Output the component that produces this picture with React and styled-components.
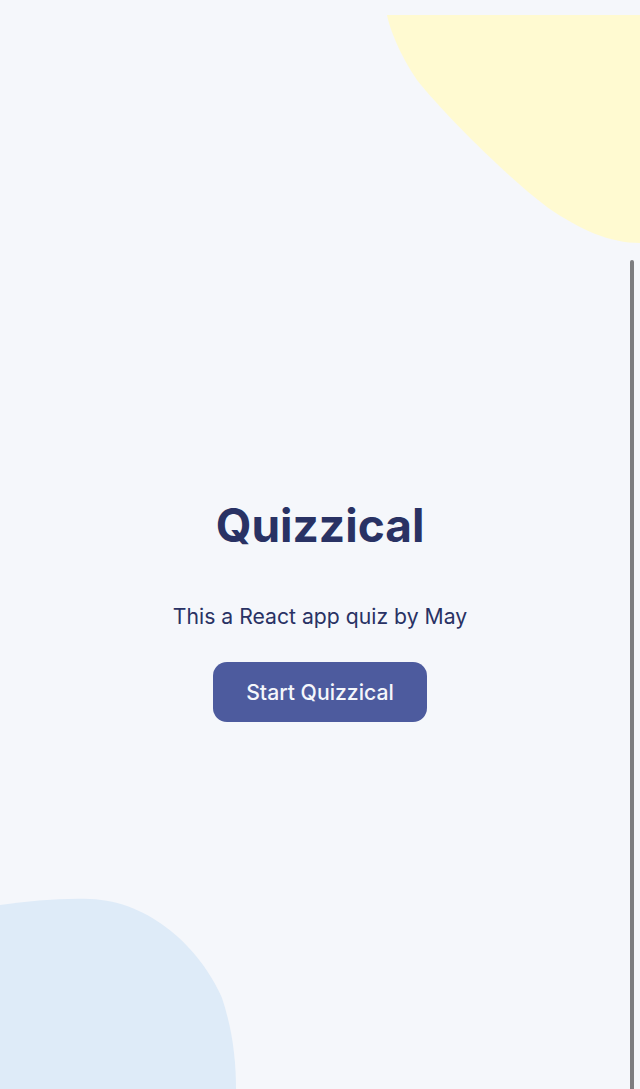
import React from "react";
import styled, { createGlobalStyle } from "styled-components";

const Global = createGlobalStyle`
  html, body { margin: 0; padding: 0; }
  body {
    background: #F5F7FB;
    font-family: Inter, "Noto Sans", sans-serif;
    overflow: hidden;
  }
`;

const Page = styled.main`
  position: relative;
  width: 640px;
  height: 1089px;
  overflow: hidden;
  background: #F5F7FB;
  display: flex;
  flex-direction: column;
  align-items: center;
  justify-content: flex-start;
  padding-top: 494px;
  box-sizing: border-box;
`;

const Blob = styled.svg`
  position: absolute;
  left: ${(p) => p.$left}px;
  top: ${(p) => p.$top}px;
  z-index: 0;
`;

const Content = styled.section`
  position: relative;
  z-index: 1;
  display: flex;
  flex-direction: column;
  align-items: center;
`;

const Title = styled.h1`
  margin: 0;
  font-family: Inter, sans-serif;
  font-weight: 700;
  font-size: 46px;
  line-height: 62px;
  color: #293264;
  letter-spacing: 0;
`;

const Subtitle = styled.p`
  margin: 46px 0 0;
  font-family: Inter, sans-serif;
  font-weight: 400;
  font-size: 21.2px;
  line-height: 28px;
  color: #293264;
`;

const StartButton = styled.button`
  margin-top: 32px;
  width: 214px;
  height: 60px;
  border: none;
  border-radius: 14px;
  background: #4D5B9E;
  color: #F5F7FB;
  font-family: Inter, sans-serif;
  font-weight: 500;
  font-size: 21.2px;
  cursor: pointer;
`;

const ScrollThumb = styled.div`
  position: absolute;
  right: 6px;
  top: 260px;
  bottom: 0;
  width: 4px;
  border-radius: 2px 2px 0 0;
  background: #7d7d80;
  z-index: 2;
`;

export default function App() {
  return (
    <>
      <Global />
      <Page>
        <Blob $left={385} $top={15} width="255" height="232" viewBox="0 0 255 232">
          <path
            d="M2 0 H255 V228 C 225 228, 195 215, 162 192 C 120 160, 60 100, 32 65 C 15 40, 5 15, 2 0 Z"
            fill="#FFFAD1"
          />
        </Blob>
        <Blob $left={0} $top={898} width="240" height="191" viewBox="0 0 240 191">
          <path
            d="M0 7 C 30 3, 60 0, 90 1 C 150 3, 200 50, 222 100 C 232 130, 236 160, 236 191 H0 Z"
            fill="#DEEBF8"
          />
        </Blob>
        <Content>
          <Title>Quizzical</Title>
          <Subtitle>This a React app quiz by May</Subtitle>
          <StartButton>Start Quizzical</StartButton>
        </Content>
        <ScrollThumb />
      </Page>
    </>
  );
}
